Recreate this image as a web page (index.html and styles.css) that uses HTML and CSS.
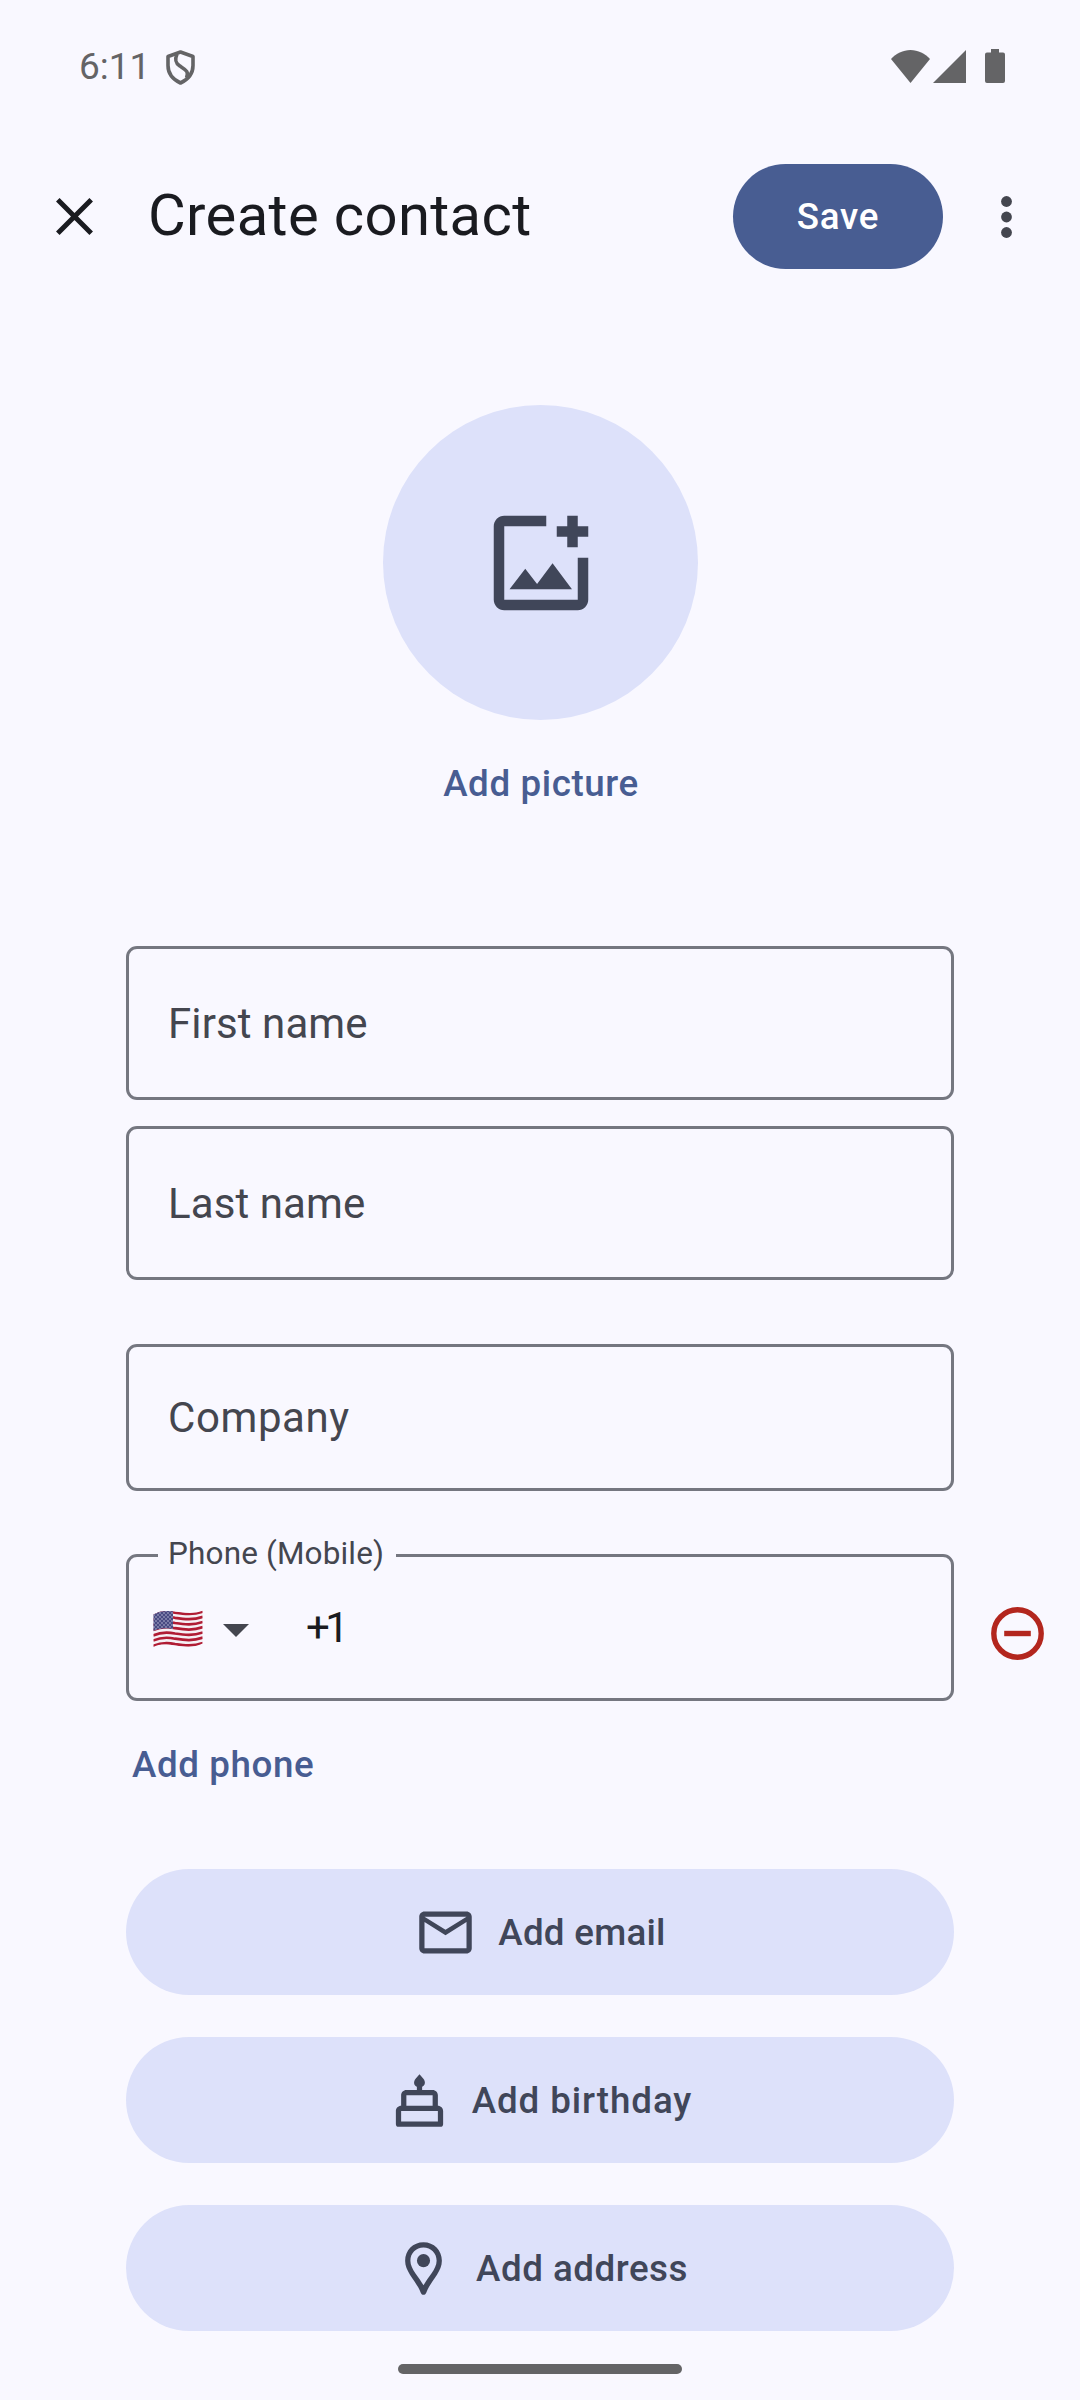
FILE: index.html
```html
<!DOCTYPE html>
<html lang="en">
<head>
<meta charset="utf-8">
<title>Create contact</title>
<link rel="stylesheet" href="styles.css">
</head>
<body>
<header class="status">
  <span class="clock">6:11</span>
  <svg class="shield" viewBox="0 0 29 35" fill="none" stroke="currentColor" stroke-width="3.6" stroke-linejoin="round"><path d="M14.500 2 27 6.500V15.500C27 23.500 22 29.500 14.500 33 7 29.500 2 23.500 2 15.500V6.500Z"/><path d="M11 4C8.500 10 9.500 13 13.500 15.800 19 19.500 23.500 21 20.500 28"/></svg>
  <span class="spacer"></span>
  <svg class="wifi" viewBox="0 0 39 33" fill="currentColor"><path d="M0 9C5 3.500 12 0 19.500 0S34 3.500 39 9L19.500 33Z"/></svg>
  <svg class="signal" viewBox="0 0 33 33" fill="currentColor"><path d="M33 0V33H0Z"/></svg>
  <svg class="battery" viewBox="0 0 20 34" fill="currentColor"><path d="M6 0H14V3.500H18Q20 3.500 20 5.500V32Q20 34 18 34H2Q0 34 0 32V5.500Q0 3.500 2 3.500H6Z"/></svg>
</header>

<div class="appbar">
  <svg class="close" viewBox="0 0 37 37" stroke="currentColor" stroke-width="5"><path d="M1.800 1.800 35.200 35.200M35.200 1.800 1.800 35.200"/></svg>
  <h1 class="title">Create contact</h1>
  <button class="save">Save</button>
  <svg class="more" viewBox="0 0 11 42" fill="currentColor"><circle cx="5.500" cy="5.500" r="5.400"/><circle cx="5.500" cy="21" r="5.400"/><circle cx="5.500" cy="36.500" r="5.400"/></svg>
</div>

<main class="form">
  <div class="avatar">
    <svg class="avatar-icon" viewBox="0 0 24 24" fill="currentColor"><path d="M5 3H13V5H5V19H19V11H21V19C21 20.100 20.100 21 19 21H5C3.900 21 3 20.100 3 19V5C3 3.900 3.900 3 5 3ZM17 3H19V5H21V7H19V9H17V7H15V5H17ZM6 17 9 13.100 11.250 16 14.200 12.050 17.900 17Z"/></svg>
  </div>
  <a class="link picture">Add picture</a>

  <div class="field tall first">First name</div>
  <div class="field tall last">Last name</div>
  <div class="field company">Company</div>
  <div class="phone-row">
    <div class="field phone">
      <span class="label">Phone (Mobile)</span>
      <svg class="flag" viewBox="0 0 50 38">
        <defs>
          <clipPath id="wave"><path d="M.500 4.500C6 1 12 .500 19 1.200 29 2.400 40 4.500 49.500 .800V33.500C40 38.500 30 36.500 20 35.200 13 34.400 6 34 .500 37Z"/></clipPath>
          <pattern id="stars" width="4" height="4" patternUnits="userSpaceOnUse"><circle cx="1" cy="1" r=".650" fill="#d8d8ec"/><circle cx="3" cy="3" r=".650" fill="#d8d8ec"/></pattern>
        </defs>
        <g clip-path="url(#wave)">
          <path fill="#f5f0f5" d="M0 0H50V38H0Z"/>
          <g fill="none" stroke="#b01c34" stroke-width="2.700">
            <path d="M0 4.500C9 .500 16 1.300 22 2.600 32 4.200 40 5 50 1.500"/>
            <path d="M0 9.700C9 5.700 16 6.500 22 7.800 32 9.400 40 10.200 50 6.700"/>
            <path d="M0 14.900C9 10.900 16 11.700 22 13 32 14.600 40 15.400 50 11.900"/>
            <path d="M0 20.100C9 16.100 16 16.900 22 18.200 32 19.800 40 20.600 50 17.100"/>
            <path d="M0 25.400C9 21.400 16 22.200 22 23.500 32 25.100 40 25.900 50 22.400"/>
            <path d="M0 30.600C9 26.600 16 27.400 22 28.700 32 30.300 40 31.100 50 27.600"/>
            <path d="M0 36C9 32 16 32.800 22 34.100 32 35.700 40 36.500 50 33"/>
          </g>
          <path fill="#484a82" d="M0 0H20V19C13 17.800 7 18 0 21Z"/>
          <path fill="url(#stars)" d="M0 0H20V19C13 17.800 7 18 0 21Z"/>
        </g>
      </svg>
      <svg class="caret" viewBox="0 0 26 13" fill="currentColor"><path d="M0 0H26L13 13Z"/></svg>
      <span class="code">+1</span>
    </div>
    <svg class="remove" viewBox="0 0 53 53" fill="none" stroke="currentColor" stroke-width="5.400"><circle cx="26.500" cy="26.500" r="23.700"/><path d="M13.200 26.500H39.800"/></svg>
  </div>
  <a class="link add-phone">Add phone</a>

  <div class="actions">
    <button class="action">
      <svg viewBox="0 0 24 24" fill="currentColor"><path d="M22 6C22 4.900 21.100 4 20 4H4C2.900 4 2 4.900 2 6V18C2 19.100 2.900 20 4 20H20C21.100 20 22 19.100 22 18ZM20 6 12 10.990 4 6ZM20 18H4V8L12 13 20 8Z"/></svg>
      <span class="email">Add email</span>
    </button>
    <button class="action">
      <svg viewBox="0 0 24 24" fill="currentColor"><path d="M12 2 13.400 3.600C14.600 5 14 6.300 13 6.800V8H17C18.100 8 19 8.900 19 10V14C20.100 14 21 14.900 21 16V21C21 21.600 20.600 22 20 22H4C3.400 22 3 21.600 3 21V16C3 14.900 3.900 14 5 14V10C5 8.900 5.900 8 7 8H11V6.800C10 6.300 9.400 5 10.600 3.600ZM7 10V14H17V10ZM5 16V20H19V16Z" fill-rule="evenodd"/></svg>
      <span class="birthday">Add birthday</span>
    </button>
    <button class="action">
      <svg viewBox="0 0 24 24" fill="currentColor"><path fill-rule="evenodd" d="M12 2C8 2 5 5.100 5 9 5 13.500 9.400 16.800 11 21.300 11.200 21.800 11.600 22 12 22S12.800 21.800 13 21.300C14.600 16.800 19 13.500 19 9 19 5.100 16 2 12 2ZM12 18.400C10.400 15.300 7 12.300 7 9 7 6.100 9.200 4 12 4S17 6.100 17 9C17 12.300 13.600 15.300 12 18.400Z"/><circle cx="12" cy="9" r="2.500"/></svg>
      <span>Add address</span>
    </button>
  </div>
</main>
<div class="handle"></div>
</body>
</html>
```
FILE: styles.css
```css
* { box-sizing: border-box; }
body {
  margin: 0;
  width: 1080px;
  height: 2400px;
  overflow: hidden;
  display: flex;
  flex-direction: column;
  background: #f9f8ff;
  color: #44464f;
  font-family: Roboto, "Open Sans", sans-serif;
}
svg { display: block; flex: none; }
button { border: 0; font: inherit; }

.status {
  height: 132px;
  padding: 0 75px 0 79px;
  display: flex;
  align-items: center;
  color: #646466;
}
.clock { width: 87px; font-size: 37px; letter-spacing: 0; }
.shield { width: 29px; height: 35px; margin-top: 3px; }
.spacer { flex: 1; }
.wifi { width: 39px; height: 33px; margin-right: 3px; }
.signal { width: 33px; height: 33px; margin-right: 19px; }
.battery { width: 20px; height: 34px; }

.appbar {
  height: 169px;
  padding: 0 68px 0 56px;
  display: flex;
  align-items: center;
  color: #44464f;
}
.close { width: 37px; height: 37px; color: #1a1b20; }
.title {
  flex: 1;
  margin: 0 0 3px 55px;
  font-size: 58px;
  font-weight: 400;
  letter-spacing: 0.35px;
  color: #1a1b20;
}
.save {
  width: 210px;
  height: 105px;
  margin-right: 58px;
  padding: 0;
  border-radius: 53px;
  background: #485d92;
  color: #fff;
  font-size: 36.75px;
  font-weight: 500;
  letter-spacing: 0.7px;
}
.more { width: 11px; height: 42px; }

.form { width: 828px; margin: 104px 0 0 126px; display: flex; flex-direction: column; }
.avatar {
  width: 315px;
  height: 315px;
  align-self: center;
  display: grid;
  place-items: center;
  border-radius: 50%;
  background: #dde1fa;
  color: #404659;
}
.avatar-icon { width: 126px; height: 126px; margin-left: 1px; }
.link {
  height: 60px;
  line-height: 60px;
  font-size: 36.75px;
  font-weight: 500;
  letter-spacing: 0.6px;
  color: #485d92;
}
.picture { align-self: center; margin-top: 34px; padding-left: 2px; }

.field {
  position: relative;
  height: 147px;
  padding: 0 39px;
  display: flex;
  align-items: center;
  border: 3px solid #757780;
  border-radius: 11px;
  font-size: 42px;
  letter-spacing: 0.1px;
}
.tall { height: 154px; }
.first { margin-top: 132px; }
.last { margin-top: 26px; }
.company { margin-top: 64px; letter-spacing: 0.6px; }
.phone-row { display: flex; align-items: center; margin-top: 63px; width: 918px; }
.phone { width: 828px; padding: 0 24px; }
.label {
  position: absolute;
  left: 29px;
  top: -22px;
  width: 238px;
  padding-left: 10px;
  background: #f9f8ff;
  font-size: 31.5px;
  line-height: 38px;
  letter-spacing: 0.15px;
  white-space: nowrap;
}
.flag { width: 50px; height: 38px; margin-top: 2px; }
.caret { width: 26px; height: 13px; margin: 5px 0 0 20px; }
.code { margin-left: 57px; color: #1a1b20; letter-spacing: -4.5px; }
.remove { width: 53px; height: 53px; margin: 12px 0 0 37px; color: #b3261e; }
.add-phone { margin: 34px 0 0 6px; }

.actions { margin-top: 74px; display: flex; flex-direction: column; gap: 42px; }
.action {
  height: 126px;
  display: flex;
  align-items: center;
  justify-content: center;
  gap: 21px;
  border-radius: 63px;
  background: #dde1fa;
  color: #404659;
  font-size: 36.75px;
  font-weight: 500;
  letter-spacing: 0.5px;
}
.email { letter-spacing: 0.25px; }
.birthday { letter-spacing: 0.9px; }
.action svg { width: 63px; height: 63px; }
.handle { width: 284px; height: 10px; margin: 33px 0 0 398px; border-radius: 5px; background: #646466; }
```
